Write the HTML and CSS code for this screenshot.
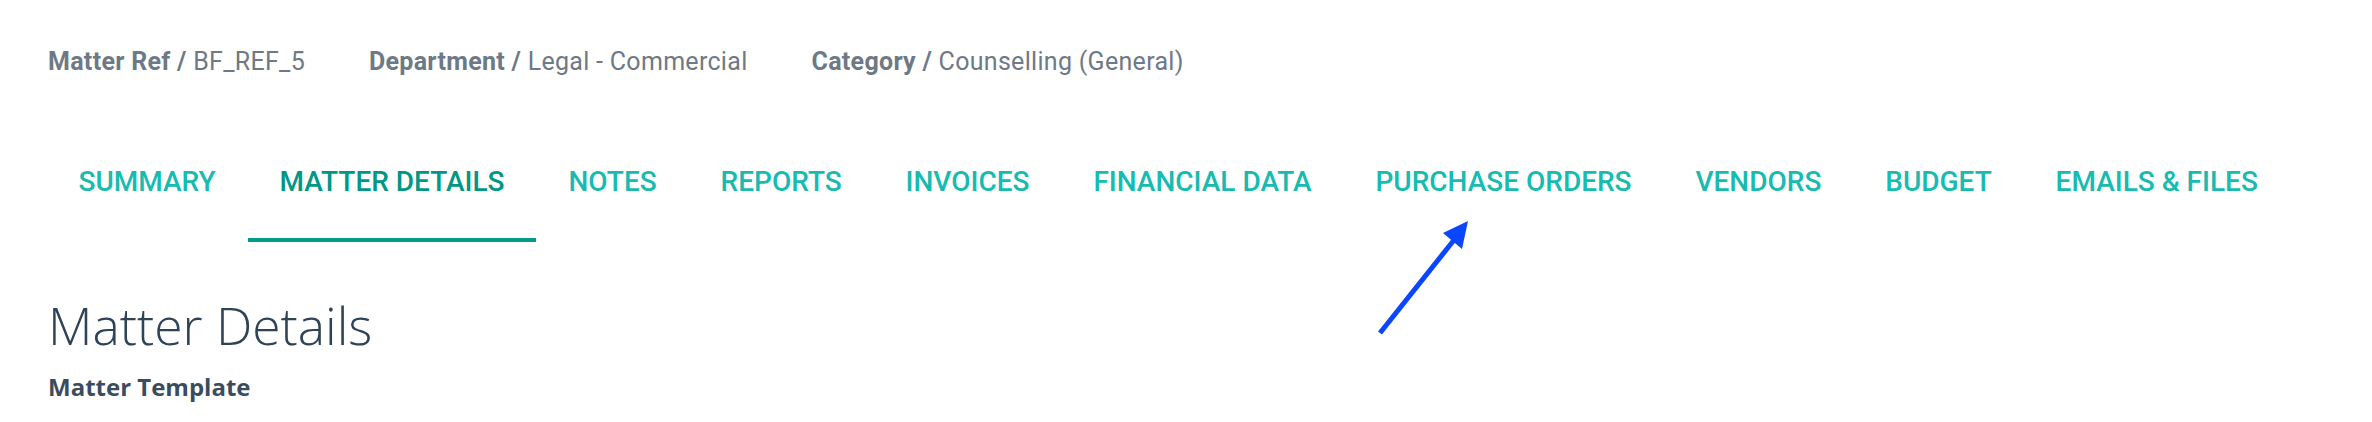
FILE: index.html
```html
<!DOCTYPE html>
<html lang="en">
<head>
<meta charset="utf-8">
<title>Matter Details</title>
<link rel="stylesheet" href="styles.css">
</head>
<body>
<div class="page">
  <div class="meta">
    <div class="meta-item"><span class="meta-label">Matter Ref /</span> <span class="meta-value">BF_REF_5</span></div>
    <div class="meta-item"><span class="meta-label">Department /</span> <span class="meta-value">Legal - Commercial</span></div>
    <div class="meta-item"><span class="meta-label">Category /</span> <span class="meta-value">Counselling (General)</span></div>
  </div>
  <nav class="tabs">
    <a class="tab">SUMMARY</a>
    <a class="tab active">MATTER DETAILS</a>
    <a class="tab">NOTES</a>
    <a class="tab">REPORTS</a>
    <a class="tab">INVOICES</a>
    <a class="tab">FINANCIAL DATA</a>
    <a class="tab">PURCHASE ORDERS</a>
    <a class="tab">VENDORS</a>
    <a class="tab">BUDGET</a>
    <a class="tab">EMAILS &amp; FILES</a>
  </nav>
  <h1 class="title">Matter Details</h1>
  <h2 class="subtitle">Matter Template</h2>
</div>
<svg class="annot-arrow" width="110" height="125" viewBox="0 0 110 125" aria-hidden="true">
  <line x1="10" y1="118" x2="84" y2="25" stroke="#0a45ff" stroke-width="5"/>
  <polygon points="98,6 73,18 92,34" fill="#0a45ff"/>
</svg>
</body>
</html>
```

FILE: styles.css
```css
html, body {
  margin: 0;
  padding: 0;
  background: #ffffff;
}

.page {
  padding: 47px 48px 0 48px;
}

.meta {
  display: flex;
  gap: 64px;
  font-family: Roboto, "Liberation Sans", sans-serif;
  font-size: 25px;
  line-height: 30px;
  letter-spacing: 0.3px;
  color: #6e7986;
}

.meta-label {
  font-weight: 700;
}

.meta-value {
  font-weight: 400;
}

.tabs {
  display: flex;
  margin-left: -1.5px;
}

.tab {
  display: block;
  padding: 90px 31.95px 41px 31.95px;
  font-family: Roboto, "Liberation Sans", sans-serif;
  font-weight: 500;
  font-size: 28px;
  line-height: 30px;
  color: #17bbb1;
  border-bottom: 4px solid transparent;
  text-decoration: none;
}

.tab.active {
  color: #009786;
  border-bottom-color: #009b8b;
}

.title {
  margin: 53px 0 0 0;
  font-family: "Open Sans", sans-serif;
  font-weight: 300;
  font-size: 51.5px;
  line-height: 60px;
  color: #2e4356;
}

.subtitle {
  margin: 16px 0 0 0;
  font-family: "Open Sans", sans-serif;
  font-weight: 700;
  font-size: 24px;
  line-height: 32px;
  color: #3b4c5e;
}

.annot-arrow {
  position: absolute;
  left: 1370px;
  top: 215px;
}
```
